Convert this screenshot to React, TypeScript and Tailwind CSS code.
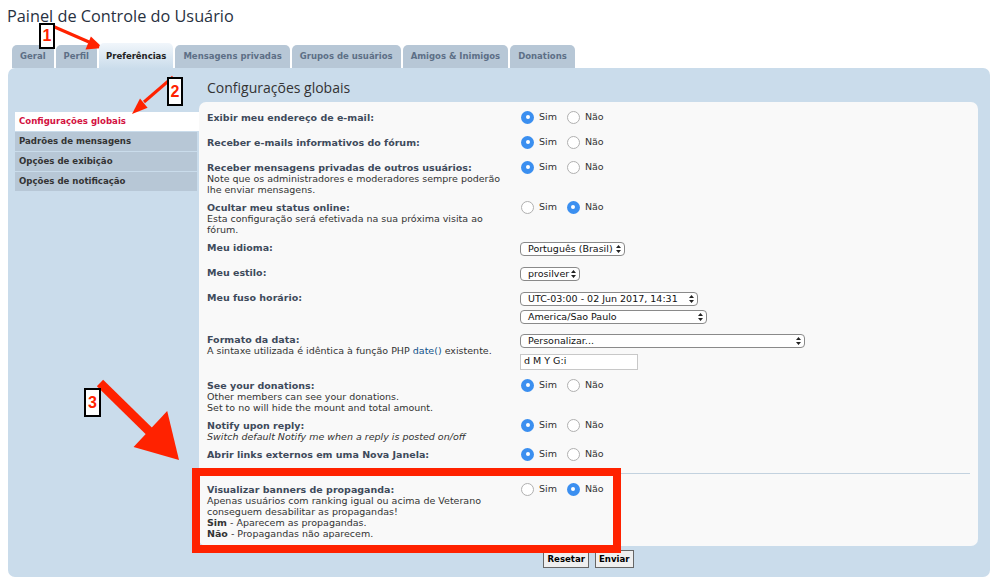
import React from 'react';

const tabs = [
  { name: 'Geral' },
  { name: 'Perfil' },
  { name: 'Preferências', active: true },
  { name: 'Mensagens privadas' },
  { name: 'Grupos de usuários' },
  { name: 'Amigos & Inimigos' },
  { name: 'Donations' },
];

const menu = [
  { name: 'Configurações globais', active: true },
  { name: 'Padrões de mensagens' },
  { name: 'Opções de exibição' },
  { name: 'Opções de notificação' },
];

const Radio = ({ checked, label }: { checked?: boolean; label: string }) => (
  <span className="flex items-center h-[11px]">
    {checked ? (
      <span className="w-[13px] h-[13px] rounded-full bg-[#3b8ff0] flex items-center justify-center shrink-0">
        <span className="w-[4px] h-[4px] rounded-full bg-white" />
      </span>
    ) : (
      <span className="w-[13px] h-[13px] rounded-full border border-[#b0b0b0] bg-white shrink-0" />
    )}
    <span className="ml-[5px] text-[#333]">{label}</span>
  </span>
);

const YesNo = ({ yes }: { yes: boolean }) => (
  <div className="flex items-center gap-[10px] ml-[1px]">
    <Radio checked={yes} label="Sim" />
    <Radio checked={!yes} label="Não" />
  </div>
);

const Select = ({ className, children }: { className: string; children: React.ReactNode }) => (
  <div
    className={`${className} h-[14px] border border-[#8a8a8a] rounded-[4px] bg-white flex items-center justify-between pl-[7px] pr-[3px] text-[#111] leading-none`}
  >
    <span>{children}</span>
    <svg width="5" height="8" viewBox="0 0 5 8">
      <path d="M2.5 0 L5 3 H0 Z M0 5 H5 L2.5 8 Z" fill="#222" />
    </svg>
  </div>
);

const Row = ({
  label,
  children,
  desc,
}: {
  label: string;
  children?: React.ReactNode;
  desc?: React.ReactNode;
}) => (
  <div className="flex py-[3.5px] min-h-[25px] pl-[8px]">
    <div className="w-[313px] shrink-0 leading-[11px]">
      <div className="w-[296px]">
        <div className="font-bold text-[#3e4a5b]">{label}</div>
        {desc && <div className="text-[#333]">{desc}</div>}
      </div>
    </div>
    <div>{children}</div>
  </div>
);

export default function App() {
  return (
    <div
      className="relative w-[1000px] h-[587px] overflow-hidden bg-white text-[9.5px]"
      style={{ fontFamily: '"DejaVu Sans", Verdana, sans-serif' }}
    >
      {/* Title */}
      <h2
        className="pt-[6px] pl-[7px] text-[16.3px] leading-[20px] text-[#28313f]"
        style={{ fontFamily: '"Open Sans", sans-serif' }}
      >
        Painel de Controle do Usuário
      </h2>

      {/* Tabs */}
      <div className="mt-[16px] pl-[12px] flex items-end gap-[2px] h-[26px] text-[8.5px]">
        {tabs.map((t) =>
          t.active ? (
            <div
              key={t.name}
              className="h-[26px] px-[7px] rounded-t-[5px] bg-gradient-to-b from-[#f1f6fb] to-[#cadceb] flex items-center font-bold text-[#222] relative z-10 -mb-[1px]"
            >
              {t.name}
            </div>
          ) : (
            <div
              key={t.name}
              className="h-[23px] px-[8px] rounded-t-[5px] bg-[#b7c7d6] flex items-center font-bold text-[#5d6f86]"
            >
              {t.name}
            </div>
          )
        )}
      </div>

      {/* Panel */}
      <div className="ml-[8px] w-[982px] bg-[#cadceb] rounded-[7px] flex pl-[7px] pr-[12px] pb-[9px]">
        {/* Left menu */}
        <div className="w-[184px] shrink-0 mt-[44px] flex flex-col gap-[1px] text-[8.6px]">
          {menu.map((m) =>
            m.active ? (
              <div
                key={m.name}
                className="h-[19px] w-[184px] bg-white flex items-center pl-[4px] font-bold text-[#d31141]"
              >
                {m.name}
              </div>
            ) : (
              <div
                key={m.name}
                className="h-[19px] w-[182px] bg-[#b7c7d6] flex items-center pl-[4px] font-bold text-[#333]"
              >
                {m.name}
              </div>
            )
          )}
        </div>

        {/* Content */}
        <div className="flex-1 flex flex-col">
          <h3
            className="pt-[10px] pl-[8px] text-[14px] leading-[20px] text-[#333] mb-[4px]"
            style={{ fontFamily: '"Open Sans", sans-serif' }}
          >
            Configurações globais
          </h3>

          <div className="bg-[#f9f9f9] rounded-[7px] pt-[6px] pb-[4px] pr-[8px]">
            <Row label="Exibir meu endereço de e-mail:">
              <YesNo yes />
            </Row>
            <Row label="Receber e-mails informativos do fórum:">
              <YesNo yes />
            </Row>
            <Row
              label="Receber mensagens privadas de outros usuários:"
              desc={<>Note que os administradores e moderadores sempre poderão lhe enviar mensagens.</>}
            >
              <YesNo yes />
            </Row>
            <Row
              label="Ocultar meu status online:"
              desc={<>Esta configuração será efetivada na sua próxima visita ao fórum.</>}
            >
              <YesNo yes={false} />
            </Row>
            <Row label="Meu idioma:">
              <Select className="w-[105px]">Português (Brasil)</Select>
            </Row>
            <Row label="Meu estilo:">
              <Select className="w-[60px]">prosilver</Select>
            </Row>
            <Row label="Meu fuso horário:">
              <div className="flex flex-col gap-[4px] mb-[3px]">
                <Select className="w-[178px]">UTC-03:00 - 02 Jun 2017, 14:31</Select>
                <Select className="w-[187px]">America/Sao Paulo</Select>
              </div>
            </Row>
            <Row
              label="Formato da data:"
              desc={
                <>
                  A sintaxe utilizada é idêntica à função PHP <span className="text-[#105289]">date()</span>{' '}
                  existente.
                </>
              }
            >
              <div className="flex flex-col gap-[6px] mb-[3px]">
                <Select className="w-[285px]">Personalizar...</Select>
                <div className="w-[118px] h-[16px] border border-[#c8c8c8] bg-white flex items-center pl-[3px] text-[#111]">
                  d M Y G:i
                </div>
              </div>
            </Row>
            <Row
              label="See your donations:"
              desc={
                <>
                  Other members can see your donations.
                  <br />
                  Set to no will hide the mount and total amount.
                </>
              }
            >
              <YesNo yes />
            </Row>
            <Row
              label="Notify upon reply:"
              desc={<span className="italic">Switch default Notify me when a reply is posted on/off</span>}
            >
              <YesNo yes />
            </Row>
            <Row label="Abrir links externos em uma Nova Janela:">
              <YesNo yes />
            </Row>

            <div className="mt-[3px] mb-[6px] ml-[1px] h-px bg-[#c3d2df]" />

            <Row
              label="Visualizar banners de propaganda:"
              desc={
                <>
                  Apenas usuários com ranking igual ou acima de Veterano conseguem desabilitar as propagandas!
                  <br />
                  <b>Sim</b> - Aparecem as propagandas.
                  <br />
                  <b>Não</b> - Propagandas não aparecem.
                </>
              }
            >
              <YesNo yes={false} />
            </Row>
          </div>

          <div className="mt-[4px] flex justify-center gap-[6px] text-[8.6px]">
            <button className="h-[18px] px-[3px] bg-[#efefef] border border-[#666] font-bold text-black leading-none">
              Resetar
            </button>
            <button className="h-[18px] px-[3px] bg-[#efefef] border border-[#666] font-bold text-black leading-none">
              Enviar
            </button>
          </div>
        </div>
      </div>

      {/* Annotations */}
      <svg className="absolute inset-0 pointer-events-none" width="1000" height="587">
        <line x1="50" y1="25" x2="89" y2="42" stroke="#ff2200" strokeWidth="3" />
        <polygon points="103,48 85.5,49.4 90.9,36.4" fill="#ff2200" />
        <line x1="173" y1="77" x2="144" y2="102" stroke="#ff2200" strokeWidth="3" />
        <polygon points="132,114 147.6,107.7 140,98.5" fill="#ff2200" />
        <line x1="100" y1="383" x2="152" y2="434" stroke="#ff2200" strokeWidth="9" />
        <polygon points="179,460 133.6,447 167.2,411" fill="#ff2200" />
      </svg>

      <div className="absolute left-[39px] top-[23px] w-[16px] h-[26px] border-2 border-black bg-white flex items-center justify-center text-[#ff2200] font-bold text-[16px]"
        style={{ fontFamily: '"Liberation Sans", Arial, sans-serif' }}>
        1
      </div>
      <div className="absolute left-[167px] top-[77px] w-[16px] h-[29px] border-2 border-black bg-white flex items-center justify-center text-[#ff2200] font-bold text-[16px]"
        style={{ fontFamily: '"Liberation Sans", Arial, sans-serif' }}>
        2
      </div>
      <div className="absolute left-[84px] top-[388px] w-[17px] h-[29px] border-2 border-black bg-white flex items-center justify-center text-[#ff2200] font-bold text-[16px]"
        style={{ fontFamily: '"Liberation Sans", Arial, sans-serif' }}>
        3
      </div>

      <div className="absolute left-[192px] top-[468px] w-[429px] h-[85px] border-[8px] border-[#ff2200] pointer-events-none" />
    </div>
  );
}
